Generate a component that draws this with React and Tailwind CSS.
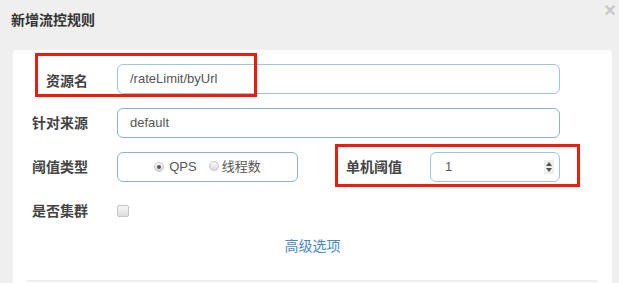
import React from "react";

const font = { fontFamily: '"Liberation Sans", "Noto Sans CJK SC", sans-serif' };

function Label({ children, className = "" }) {
  return (
    <div className={"text-[14px] font-bold text-[#444] leading-[20px] " + className}>{children}</div>
  );
}

function Radio({ checked }) {
  return (
    <span className="inline-flex items-center justify-center w-[10px] h-[10px] rounded-full border border-[#c4c4c4] bg-gradient-to-b from-[#f8f8f8] to-[#dcdcdc]">
      {checked && <span className="w-[4px] h-[4px] rounded-full bg-[#555]" />}
    </span>
  );
}

export default function App() {
  return (
    <div className="w-[619px] h-[283px] bg-[#efefef] overflow-hidden relative" style={font}>
      <div className="h-[50px] pl-[11px] pt-[11px]">
        <div className="text-[14px] font-bold text-[#333] leading-[18px]">新增流控规则</div>
      </div>
      <div className="absolute right-[3px] top-[0px] text-[20px] leading-[20px] font-bold text-[#c8c8c8]">×</div>

      <div className="ml-[13px] w-[599px] h-[233px] bg-white rounded-t-[4px] relative pt-[14px]">
        {/* Row 1 */}
        <div className="flex items-center h-[30px] mb-[14px]">
          <Label className="w-[75px] text-right mt-[3px]">资源名</Label>
          <div className="ml-[29px] w-[443px] h-[30px] rounded-[6px] border border-[#a3c2df] flex items-center pl-[12px] text-[13px] text-[#555]">
            /rateLimit/byUrl
          </div>
        </div>
        {/* Row 2 */}
        <div className="flex items-center h-[30px] mb-[14px]">
          <Label className="w-[75px] text-right">针对来源</Label>
          <div className="ml-[29px] w-[443px] h-[30px] rounded-[6px] border border-[#8fb0cf] flex items-center pl-[12px] text-[13px] text-[#555]">
            default
          </div>
        </div>
        {/* Row 3 */}
        <div className="flex items-center h-[30px] mb-[14px]">
          <Label className="w-[75px] text-right">阈值类型</Label>
          <div className="ml-[29px] w-[181px] h-[30px] rounded-[6px] border border-[#8fb0cf] flex items-center justify-center text-[13px] text-[#555]">
            <Radio checked />
            <span className="ml-[5px]">QPS</span>
            <span className="ml-[12px]"><Radio /></span>
            <span className="ml-[3px]">线程数</span>
          </div>
          <Label className="ml-[48px] w-[57px]">单机阈值</Label>
          <div className="ml-[27px] w-[130px] h-[30px] rounded-[6px] border border-[#a3c2df] flex items-center pl-[14px] pr-[5px] text-[13px] text-[#555]">
            <span className="flex-1">1</span>
            <span className="w-[10px] h-[14px] bg-[#eeeeee] flex flex-col items-center justify-center gap-[2px]">
              <svg width="6" height="4" viewBox="0 0 6 4"><path d="M0 4 L3 0 L6 4 Z" fill="#555" /></svg>
              <svg width="6" height="4" viewBox="0 0 6 4"><path d="M0 0 L3 4 L6 0 Z" fill="#555" /></svg>
            </span>
          </div>
        </div>
        {/* Row 4 */}
        <div className="flex items-center h-[30px]">
          <Label className="w-[75px] text-right">是否集群</Label>
          <span className="ml-[29px] w-[12px] h-[12px] rounded-[2px] border border-[#c4c4c4] bg-gradient-to-b from-[#f6f6f6] to-[#dedede]" />
        </div>
        {/* Advanced */}
        <div className="mt-[10px] text-center text-[14px] leading-[20px] text-[#4a8ac4]">高级选项</div>
        <div className="absolute left-[14px] right-[14px] top-[230px] h-[2px] bg-[#eeeeee]" />

        {/* Red annotation boxes */}
        <div className="absolute left-[22px] top-[3px] w-[222px] h-[44px] border-[3px] border-[#ee1c0e]" />
        <div className="absolute left-[322px] top-[94px] w-[245px] h-[43px] border-[3px] border-[#ee1c0e]" />
      </div>
    </div>
  );
}
